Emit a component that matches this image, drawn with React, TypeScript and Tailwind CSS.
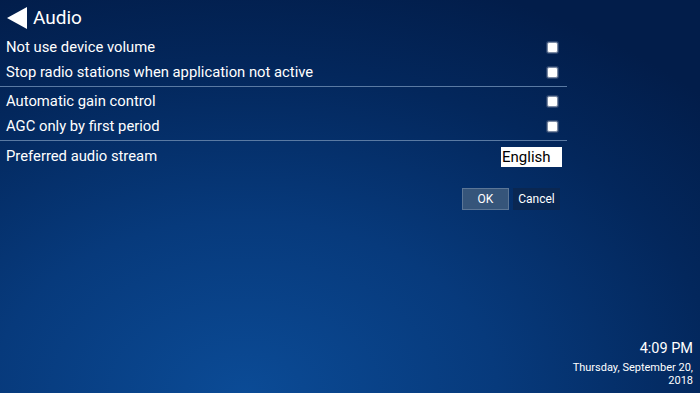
import React from "react";

const Checkbox = () => (
  <span className="block w-[11px] h-[11px] rounded-[2px] bg-white border border-[#7b8aa3] shadow-[0_0_0_1px_#2d4670]" />
);

const Row = ({ label }: { label: string }) => (
  <div className="flex items-center justify-between h-[25px] pl-[6px] pr-[9px]">
    <span className="text-[14.8px] leading-none text-white">{label}</span>
    <Checkbox />
  </div>
);

export default function App() {
  return (
    <div
      className="relative w-[700px] h-[393px] overflow-hidden text-white bg-[radial-gradient(ellipse_90%_110%_at_35%_100%,#0b4b96_0%,#073a7c_40%,#03275c_75%,#021d4a_100%)]"
      style={{ fontFamily: "Roboto, 'Noto Sans', sans-serif" }}
    >
      <div className="flex items-center h-[35px] pl-[7px] gap-[6px]">
        <svg width="20" height="22" viewBox="0 0 20 22">
          <polygon points="20,0 20,22 0,11" fill="white" />
        </svg>
        <span className="text-[19px] leading-none">Audio</span>
      </div>

      <div className="w-[567px]">
        <Row label="Not use device volume" />
        <Row label="Stop radio stations when application not active" />
        <div className="h-px bg-[#5a7aa3] mt-[1px] mb-[2px]" />
        <Row label="Automatic gain control" />
        <Row label="AGC only by first period" />
        <div className="h-px bg-[#5a7aa3] mt-[1px]" />
        <div className="flex items-center justify-between h-[31px] pl-[6px] pr-[5px]">
          <span className="text-[14.8px] leading-none">Preferred audio stream</span>
          <span className="w-[61px] h-[20px] bg-white text-black text-[15px] leading-[20px] pl-[1px]">
            English
          </span>
        </div>
        <div className="flex justify-end gap-[4px] pr-[7px] mt-[16px]">
          <button className="w-[47px] h-[22px] bg-[#36557a] border border-[#5c7696] text-[12px] text-white">
            OK
          </button>
          <button className="w-[47px] h-[22px] bg-[#0a2752] text-[12px] text-white">
            Cancel
          </button>
        </div>
      </div>

      <div className="absolute right-[7px] bottom-[6px] text-right">
        <div className="text-[14.5px] leading-[18px]">4:09 PM</div>
        <div className="text-[11px] leading-[13px] mt-[3px] w-[125px] ml-auto">
          Thursday, September 20, 2018
        </div>
      </div>
    </div>
  );
}
